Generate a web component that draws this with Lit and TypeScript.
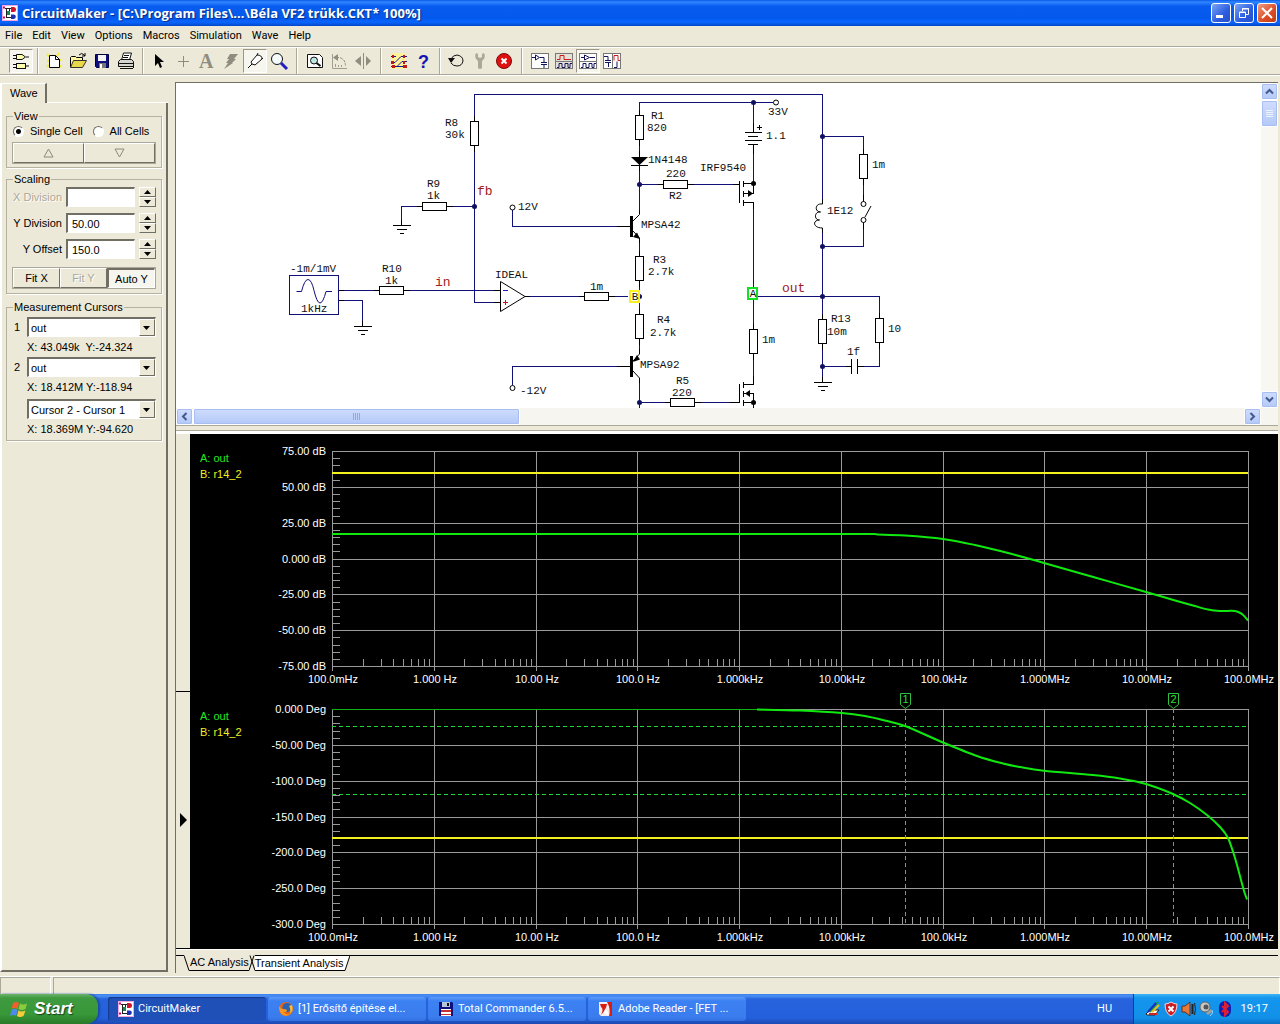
import { LitElement, html, svg, css } from "lit";
import { customElement } from "lit/decorators.js";

const sans = css`"Liberation Sans", Arial, sans-serif`;
const ui = css`Roboto, "Noto Sans", sans-serif`;

/* Logo shared by the title bar and the task button */
const appLogo = html`<svg class="logo" viewBox="0 0 16 16" width="16" height="16" aria-hidden="true">
  <rect x="0.5" y="0.5" width="15" height="15" fill="#fff" stroke="#f7a6dc" />
  <path d="M3 3.500H10M4.500 3V12M4 12.500H9M7.500 3V8M5 8.500H8" stroke="#222" fill="none" />
  <path d="M5 6h3v4H5z" fill="#178a5a" />
  <path d="M9 2h2.500a2.500 2.500 0 0 1 0 5h-2.500z" fill="#d3142e" />
  <path d="M9 9.500h2.500a2.300 2.300 0 0 1 0 4.600h-2.500z" fill="#1d2fb5" />
  <path d="M1 2.500h2M1 12.500h2" stroke="#c01060" stroke-width="2" />
</svg>`;

const icon = (body: unknown) =>
  html`<svg viewBox="0 0 20 20" width="20" height="20" aria-hidden="true">${body}</svg>`;

const icons: Record<string, unknown> = {
  parts: icon(svg`<g fill="#fff" stroke="#111"><path d="M2 4.500h4M2 7.500h4M15 6h3M2 13.500h4M2 16.500h4M15 15h3"/><path d="M5.500 3.500h5.500l3.500 2.500-3.500 2.500h-5.500z" fill="#ffffb0"/><rect x="5.500" y="12.500" width="9" height="5" fill="#ffffb0"/></g>`),
  fresh: icon(svg`<path d="M3 3l3 3M15 2l-2 3M3 10h2M3 16l2-2M17 16l-2-2M17 9h-2" stroke="#f5ee30" stroke-width="2"/><path d="M5.500 4.500h6l4 4v8h-10z" fill="#fff" stroke="#000"/><path d="M11.500 4.500v4h4" fill="none" stroke="#000"/>`),
  open: icon(svg`<path d="M2.500 16V6.500l1-1h4l1 1h6v3" fill="#fff59a" stroke="#000"/><path d="M2.500 16.500l3-7h13l-4 7z" fill="#e8d84a" stroke="#333"/><path d="M11 4q3-3 5 0l1 1M17 2v3h-3" fill="none" stroke="#000"/>`),
  save: icon(svg`<path d="M3.500 3.500h13v13h-12l-1-1z" fill="#10107c" stroke="#000040"/><rect x="6" y="4" width="8" height="6" fill="#f4f4f4"/><rect x="7" y="12" width="7" height="5" fill="#777"/><rect x="8" y="13" width="2" height="4" fill="#fff"/>`),
  print: icon(svg`<path d="M5.500 9l2-7h8l-2 7" fill="#fff" stroke="#111"/><path d="M8 4.500h5M7 6.500h5" stroke="#111"/><path d="M2.500 10.500l2-2h11l2 2v5h-15z" fill="#d4d4cc" stroke="#111"/><path d="M2 12.500h16M4 17.500h13M17.500 11v6" stroke="#111" fill="none"/>`),
  arrow: icon(svg`<path d="M6 3v12l3-3 2 5 2-1-2-5h4z" fill="#000"/>`),
  plus: icon(svg`<path d="M10.500 5v11M5 10.500h11" stroke="#8f8d80"/>`),
  letter: icon(svg`<text x="2" y="17" font-size="20" font-weight="bold" font-family="Liberation Serif, serif" fill="#8f8d80">A</text>`),
  bolt: icon(svg`<path d="M9 3h8l-4 5h2l-4 4h1l-9 6 4-6H5l3-4H6z" fill="#8f8d80"/>`),
  probe: icon(svg`<path d="M3 17l4-4M7 13l-1-2 6-7q5 0 5 4l-7 6-3-1" fill="#fff" stroke="#111"/><path d="M12 4l1-2M17 8l1-1" stroke="#111"/>`),
  zoom: icon(svg`<circle cx="8" cy="8" r="5.500" fill="#f4fbff" stroke="#111"/><path d="M5 7q1-2 3-2" stroke="#fff" fill="none"/><path d="M12 12l6 6" stroke="#2020c0" stroke-width="3"/>`),
  fit: icon(svg`<path d="M2.500 3.500h12l3 3v10h-15z" fill="#fff" stroke="#111"/><circle cx="9" cy="9.500" r="3.500" fill="#bfe6e4" stroke="#111"/><path d="M11.500 12l4 3" stroke="#111" stroke-width="2"/>`),
  rotate: icon(svg`<path d="M3.500 3v14.500H18M6.500 16v-3M9.500 16v-2M12.500 16v-2" fill="none" stroke="#a09e90"/><path d="M7 6.500h3q6 1 6.500 8" fill="none" stroke="#8f8d80" stroke-dasharray="3 1"/><path d="M9 3v7l-5-3.500z" fill="#8f8d80"/>`),
  mirror: icon(svg`<path d="M10.500 2v16" stroke="#8f8d80"/><path d="M8 5v10l-6-5z" fill="#8f8d80"/><path d="M13 5v10l5-5z" fill="#8f8d80"/>`),
  trace: icon(svg`<rect x="3" y="2" width="14" height="16" fill="#fff19a"/><path d="M2 5.500h5M12 5.500h6M2 11.500h4l6-6M2 15.500h6l5-5h5M8 15.500h10" stroke="#16169a" fill="none"/><path d="M3 5.500h2M14 5.500h2M2 11.500h3M14 15.500h4M3 15.500h3M14 11.500h2" stroke="#c01818" stroke-width="3"/>`),
  help: icon(svg`<text x="5" y="17" font-size="18" font-weight="bold" font-family="Liberation Sans, sans-serif" fill="#1414b4">?</text>`),
  undo: icon(svg`<path d="M5 8q2-4 6-4 6 1 6 6-1 5-6 5-4 0-6-3" fill="none" stroke="#111"/><path d="M2 7h7l-4 5z" fill="#111"/>`),
  wrench: icon(svg`<path d="M6 2l2 1v3l2 1 2-1V3l2-1q2 4-1 7l-1 1v7q-2 2-4 0v-7l-1-1q-3-3-1-7z" fill="#aaa899"/>`),
  stop: icon(svg`<circle cx="10" cy="10" r="7.500" fill="#e01010" stroke="#7d0808"/><path d="M7.500 7.500l5 5M12.500 7.500l-5 5" stroke="#fff" stroke-width="2"/>`),
  schem: icon(svg`<rect x="1.500" y="2.500" width="17" height="15" fill="#fff" stroke="#777"/><path d="M2 6.500h3M5.500 4v5l4-2.500zM10 6.500h4v5M11 11.500h6M11 13.500h6M14 14v3" fill="none" stroke="#14145a"/>`),
  waves: icon(svg`<rect x="1.500" y="2.500" width="17" height="15" fill="#e4e2d8" stroke="#777"/><path d="M3 8.500h3v-4h4v4h7" fill="none" stroke="#d01818"/><path d="M2 10.500h16" stroke="#777"/><path d="M3 16.500h2v-4h3v4h3v-4h3v4h2v-4h2" fill="none" stroke="#14145a"/>`),
  split: icon(svg`<rect x="1.500" y="2.500" width="17" height="15" fill="#fff" stroke="#777"/><path d="M2 10.500h16" stroke="#777"/><path d="M3 6.500h3M6.500 4v5l5-2.500zM12 6.500h5M3 16.500h2v-4h3v4h3v-4h3v4h2v-4h2" fill="none" stroke="#14145a"/>`),
  side: icon(svg`<rect x="1.500" y="2.500" width="17" height="15" fill="#fff" stroke="#777"/><path d="M10.500 2v16" stroke="#777"/><path d="M2 5.500h4v4M3 9.500h6M3 11.500h6M6.500 12v4M12 16.500h3v-6" fill="none" stroke="#14145a"/><path d="M12 9.500v-5h4v5h2" fill="none" stroke="#d01818"/>`),
};

type Tool = { id: string; label: string; pressed?: boolean; off?: boolean };
const toolGroups: { gap: string; tools: Tool[] }[] = [
  { gap: "", tools: [{ id: "parts", label: "Parts browser", pressed: true }] },
  {
    gap: "narrow",
    tools: [
      { id: "fresh", label: "New" },
      { id: "open", label: "Open" },
      { id: "save", label: "Save" },
      { id: "print", label: "Print" },
    ],
  },
  {
    gap: "narrow",
    tools: [
      { id: "arrow", label: "Select" },
      { id: "plus", label: "Wire", off: true },
      { id: "letter", label: "Text", off: true },
      { id: "bolt", label: "Delete", off: true },
      { id: "probe", label: "Probe", pressed: true },
      { id: "zoom", label: "Zoom" },
    ],
  },
  {
    gap: "wide",
    tools: [
      { id: "fit", label: "Fit to window" },
      { id: "rotate", label: "Rotate", off: true },
      { id: "mirror", label: "Mirror", off: true },
    ],
  },
  { gap: "wide", tools: [{ id: "trace", label: "Trace" }, { id: "help", label: "Help" }] },
  {
    gap: "narrow",
    tools: [
      { id: "undo", label: "Reset" },
      { id: "wrench", label: "Step", off: true },
      { id: "stop", label: "Stop" },
    ],
  },
  {
    gap: "wide",
    tools: [
      { id: "schem", label: "Schematic" },
      { id: "waves", label: "Waveforms" },
      { id: "split", label: "Split horizontally", pressed: true },
      { id: "side", label: "Split vertically" },
    ],
  },
];

/* ---------- Schematic ---------- */

@customElement("circuit-schematic")
export class CircuitSchematic extends LitElement {
  static styles = css`
    :host { display: block; flex: 1; min-width: 0; overflow: hidden; background: #fff; }
    svg { display: block; }
    .wire { stroke: #101078; fill: none; shape-rendering: crispEdges; }
    .pin { stroke: #000; fill: none; shape-rendering: crispEdges; }
    .body { stroke: #000; fill: #fff; shape-rendering: crispEdges; }
    .thin { stroke: #000; fill: none; }
    .fill { fill: #000; }
    .dot { fill: #101060; }
    .label { font: 11px "Liberation Mono", "Courier New", monospace; fill: #111; }
    .net { font: 13px "Liberation Mono", "Courier New", monospace; fill: #a02020; }
    .mark { font: 11px "Liberation Mono", "Courier New", monospace; fill: #111; text-anchor: middle; }
  `;

  private resV(x: number, y: number) {
    return svg`<path class="pin" d="M${x} ${y - 6}v36"/><rect class="body" x=${x - 4} y=${y} width="8" height="24"/>`;
  }
  private resH(x: number, y: number) {
    return svg`<path class="pin" d="M${x - 6} ${y}h36"/><rect class="body" x=${x} y=${y - 4} width="24" height="8"/>`;
  }
  private ground(x: number, y: number) {
    return svg`<path class="pin" d="M${x} ${y - 6}v6M${x - 9} ${y}h18M${x - 5} ${y + 4}h10M${x - 2} ${y + 8}h4"/>`;
  }
  private dot(x: number, y: number) {
    return svg`<circle class="dot" cx=${x} cy=${y} r="2.500"/>`;
  }
  private terminal(x: number, y: number) {
    return svg`<circle cx=${x} cy=${y} r="2.500" fill="#fff" stroke="#000"/>`;
  }

  render() {
    const labels: [number, number, string][] = [
      [445, 126, "R8"], [445, 138, "30k"], [427, 187, "R9"], [427, 199, "1k"],
      [518, 210, "12V"], [290, 272, "-1m/1mV"], [382, 272, "R10"], [385, 284, "1k"],
      [495, 278, "IDEAL"], [301, 312, "1kHz"], [520, 394, "-12V"],
      [651, 119, "R1"], [647, 131, "820"], [648, 163, "1N4148"], [666, 177, "220"],
      [669, 199, "R2"], [700, 171, "IRF9540"], [768, 115, "33V"], [766, 139, "1.1"],
      [641, 228, "MPSA42"], [653, 263, "R3"], [648, 275, "2.7k"], [590, 290, "1m"],
      [657, 323, "R4"], [650, 336, "2.7k"], [640, 368, "MPSA92"], [676, 384, "R5"],
      [672, 396, "220"], [762, 343, "1m"], [831, 322, "R13"], [827, 335, "10m"],
      [847, 355, "1f"], [872, 168, "1m"], [827, 214, "1E12"], [888, 332, "10"],
    ];
    const nets: [number, number, string][] = [[477, 195, "fb"], [435, 286, "in"], [782, 292, "out"]];
    return html`<svg viewBox="176 83 1085 325" width="1085" height="325" role="img" aria-label="Circuit schematic">
      <path class="wire" d="M474.500 302.500V94.500H822.500V382M401.500 220V206.500H474.500M474.500 302.500H494M338.500 290.500H494M338.500 300.500H362.500V322
        M525 296.500H628M512.500 210V226.500H625M512.500 385V366.500H625M639.500 408V102.500H773M639.500 184.500H734M639.500 402.500H734
        M753.500 102.500V128M753.500 149V183M753.500 205V380M753.500 296.500H879.500V366.500H822.500M822.500 136.500H863.500V246.500H822.500"/>
      <path stroke="#fff" d="M639.500 214V239M639.500 353V379M822.500 204V228M863.500 200V224M847 366.500H862"/>
      <path class="pin" d="M494 290.500h6M494 302.500h6M525 296.500h5M338 290.500h6M338 300.500h6"/>
      ${this.resV(474.5, 121.5)}${this.resH(422.5, 206.5)}${this.resH(379.5, 290.5)}${this.resH(584.5, 296.5)}
      ${this.resV(639.5, 115.5)}${this.resH(663.5, 184.5)}${this.resV(639.5, 256.5)}${this.resV(639.5, 314.5)}
      ${this.resH(670.5, 402.5)}${this.resV(753.5, 329.5)}${this.resV(822.5, 319.5)}${this.resV(863.5, 154.5)}
      ${this.resV(879.5, 318.5)}
      ${this.ground(401.5, 225.5)}${this.ground(362.5, 326.5)}${this.ground(822.5, 382.5)}

      <rect x="289.500" y="275.500" width="49" height="39" fill="#fff" stroke="#101078" />
      <path d="M296.500 291.500h5q3-12 6.500-12t6 11q3 12.500 6 12.500t6-11.500h6" fill="none" stroke="#101078" />

      <path d="M500.500 281.500V311.500L525 296.500Z" fill="#fff" stroke="#000" />
      <path d="M503 290.500h5" stroke="#2020c0" /><path d="M503 302.500h5M505.500 300v5" stroke="#c01818" />

      <path class="pin" d="M639.500 151v20M631 165.500h17" /><path class="fill" d="M631 157h17l-8.500 8z" />

      <path class="pin" d="M617 226.500h14M617 366.500h14" />
      <path class="fill" d="M630 216h3v21h-3zM630 356h3v21h-3z" />
      <path class="thin" d="M633 221l6.500-6.500v-4M633 231l6.500 7v5M633 361l6.500-7v-5M633 371l6.500 7v5" />
      <path class="fill" d="M640 239l-7-2 4-4.500zM633 362l4-7 3 4.500z" />

      <path class="pin" d="M753.500 123v9M745 132.500h17M748 136.500h10M745 140.500h17M748 144.500h10M753.500 145v9M757 127.500h5M759.500 125v5" />

      <path class="pin" d="M733 184.500h6.500M739.500 181V203M743.500 181v6M743.500 191v6M743.500 200v6M743.500 183.500h10v10h-10M743.500 202.500h10v6" />
      <path class="fill" d="M748 190l5 3.500-5 3.500z" />
      <path class="pin" d="M730 402.500h9.500M739.500 403V384M743.500 382v6M743.500 391v6M743.500 400v6M753.500 376v8.500h-10M743.500 393.500h10V408M743.500 402.500h10" />
      <path class="fill" d="M750 390l-5 3.500 5 3.500z" />

      <path class="thin" d="M822.500 199v5c-8-1-8 8-2 8-6-1-7 8-1 8-7 0-7 8 3 8v5M865 217l6-11" />
      <path class="pin" d="M863.500 195v7M863.500 222v7M846 366.500h5M858 366.500h6M851.500 359v15M857.500 359v15" />
      ${this.terminal(863.5, 204)}${this.terminal(863.5, 220)}
      ${this.terminal(512.5, 207.5)}${this.terminal(512.5, 388)}${this.terminal(776, 102.5)}
      ${[[474.5, 206.5], [639.5, 184.5], [639.5, 402.5], [753.5, 102.5], [822.5, 136.5], [822.5, 246.5], [822.5, 296.5], [822.5, 366.5], [639.5, 296.5]].map(([x, y]) => this.dot(x, y))}
      <circle class="fill" cx="753.500" cy="183.500" r="2.500" /><circle class="fill" cx="753.500" cy="402.500" r="2.500" />

      <rect x="630" y="291" width="9" height="11" fill="#fff" stroke="#f8f020" stroke-width="2" />
      <rect x="748" y="288" width="9" height="11" fill="#fff" stroke="#10e020" stroke-width="2" />
      <text class="mark" x="635" y="300">B</text><text class="mark" x="753" y="297">A</text>
      ${labels.map(([x, y, t]) => svg`<text class="label" x=${x} y=${y}>${t}</text>`)}
      ${nets.map(([x, y, t]) => svg`<text class="net" x=${x} y=${y}>${t}</text>`)}
    </svg>`;
  }
}

/* ---------- Bode plots ---------- */

type Pt = [number, number];

/* Smooth path through the points */
function curve(points: Pt[]): string {
  let d = `M${points[0][0]} ${points[0][1]}`;
  for (let i = 0; i < points.length - 1; i++) {
    const a = points[Math.max(0, i - 1)];
    const b = points[i];
    const c = points[i + 1];
    const e = points[Math.min(points.length - 1, i + 2)];
    d += `C${b[0] + (c[0] - a[0]) / 6} ${b[1] + (c[1] - a[1]) / 6} ${c[0] - (e[0] - b[0]) / 6} ${c[1] - (e[1] - b[1]) / 6} ${c[0]} ${c[1]}`;
  }
  return d;
}

@customElement("bode-plots")
export class BodePlots extends LitElement {
  static styles = css`
    :host { display: block; flex: 1; min-width: 0; background: #000; }
    svg { display: block; width: 100%; height: auto; }
    text { font: 11px ${sans}; fill: #fff; }
    .end { text-anchor: end; }
    .mid { text-anchor: middle; }
    .grid { stroke: #9a9a9a; fill: none; shape-rendering: crispEdges; }
    .a { stroke: #10e810; fill: none; stroke-width: 2; }
    .b { stroke: #f4f020; stroke-width: 2; shape-rendering: crispEdges; }
    .trail { stroke: #18d838; fill: none; stroke-dasharray: 4 3; shape-rendering: crispEdges; }
    .flag { stroke: #30c040; fill: #000; }
    .green { fill: #20e820; }
    .yellow { fill: #f0f020; }
  `;

  private plot(top: number, yLabels: string[]) {
    const left = 332, width = 916, height = 215;
    const freq = ["100.0mHz", "1.000 Hz", "10.00 Hz", "100.0 Hz", "1.000kHz", "10.00kHz", "100.0kHz", "1.000MHz", "10.00MHz", "100.0MHz"];
    const px = (v: number) => Math.round(v) + 0.5;
    let d = "";
    for (let i = 0; i <= 9; i++) {
      const x = left + (i * width) / 9;
      d += `M${px(x)} ${top}V${top + height + 5}`;
      if (i < 9) for (let k = 2; k < 10; k++) d += `M${px(x + (Math.log10(k) * width) / 9)} ${top + height - 7}V${top + height}`;
    }
    for (let j = 0; j <= 6; j++) {
      const y = top + (j * height) / 6;
      d += `M${left} ${px(y)}H${left + width}`;
      if (j < 6) for (let k = 1; k < 5; k++) d += `M${left} ${px(y + (k * height) / 30)}h8`;
    }
    return svg`
      <path class="grid" d=${d}/>
      ${yLabels.map((t, j) => svg`<text class="end" x="326" y=${Math.round(top + (j * height) / 6) + 4}>${t}</text>`)}
      ${freq.map((t, i) => svg`<text class="mid" x=${Math.round(left + (i * width) / 9) + 1} y=${top + height + 17}>${t}</text>`)}
      <text class="green" x="200" y=${top + 11}>A: out</text>
      <text class="yellow" x="200" y=${top + 27}>B: r14_2</text>`;
  }

  private trail(x: number, y: number) {
    return svg`<path class="trail" d="M${x} 709V924"/><path class="trail" d="M332 ${y}H1248"/>`;
  }

  private flag(x: number, name: string) {
    return svg`<path class="flag" d="M${x - 5} 693.500h10v11l-5 4-5-4z"/>
      <text class="mid green" x=${x} y="703">${name}</text>`;
  }

  render() {
    const gain: Pt[] = [[332, 534], [600, 534], [848, 534], [878, 534.5], [905, 535.5], [943, 539], [975, 545], [1010, 553.5], [1044, 563], [1095, 577.5], [1146, 592], [1170, 599], [1193, 605.5], [1208, 609.5], [1220, 611], [1235, 611], [1242, 614], [1248, 620.5]];
    const phase: Pt[] = [[757, 709.5], [800, 710.5], [842, 713], [865, 716], [885, 720.5], [905, 726], [943, 742.5], [977, 756], [1003, 763.5], [1020, 767], [1044, 770.7], [1093, 775], [1120, 778.5], [1146, 784], [1173, 794], [1190, 803], [1207, 815], [1220, 827], [1228, 838], [1235, 858], [1241, 880], [1244, 891], [1247, 899.5]];
    return html`<svg viewBox="190 434 1088 515" role="img" aria-label="AC analysis, gain and phase">
      ${this.plot(451, ["75.00 dB", "50.00 dB", "25.00 dB", "0.000 dB", "-25.00 dB", "-50.00 dB", "-75.00 dB"])}
      ${this.plot(709, ["0.000 Deg", "-50.00 Deg", "-100.0 Deg", "-150.0 Deg", "-200.0 Deg", "-250.0 Deg", "-300.0 Deg"])}
      <path class="b" d="M332 473H1248M332 838H1248" />
      <path d="M332 709.500H757" stroke="#10b010" shape-rendering="crispEdges" />
      ${this.trail(905.5, 726.5)}${this.trail(1173.5, 794.5)}
      ${this.flag(905.5, "1")}${this.flag(1173.5, "2")}
      <path class="a" d=${curve(gain)} /><path class="a" d=${curve(phase)} />
    </svg>`;
  }
}

/* ---------- Wave panel ---------- */

const triangle = (up: boolean) =>
  html`<svg viewBox="0 0 8 4" width="8" height="4" aria-hidden="true"><path d=${up ? "M0 4h7l-3.500-4z" : "M0 0h7l-3.500 4z"} fill="#000" /></svg>`;

@customElement("wave-panel")
export class WavePanel extends LitElement {
  static styles = css`
    :host { display: flex; flex-direction: column; flex: 0 0 168px; padding: 7px 0 4px; margin-right: 7px; font: 11px/14px ${sans}; color: #000; box-sizing: border-box; }
    .tabs { display: flex; height: 20px; }
    .tab { all: unset; box-sizing: border-box; width: 47px; padding: 1px 0 2px 8px; border-left: 2px solid #fff; border-right: 2px solid #716f64; border-top: 1px solid #fff; }
    .rest { flex: 1; border-bottom: 1px solid #fff; }
    .sheet { flex: 1; border-left: 2px solid #fff; border-right: 2px solid #716f64; border-bottom: 2px solid #716f64; padding: 6px 4px; display: flex; flex-direction: column; gap: 4px; }
    fieldset { margin: 0; min-width: 0; border: 1px solid #b5b2a2; box-shadow: 1px 1px 0 #fff; padding: 1px 5px 4px; display: flex; flex-direction: column; gap: 6px; }
    .view { padding: 3px 5px; }
    .measure { gap: 3px; margin-top: 2px; padding-top: 3px; }
    legend { padding: 0 1px; margin-left: 1px; line-height: 14px; }
    .row { display: flex; align-items: center; }
    .radios { gap: 9px; height: 14px; margin-top: -2px; }
    .radios label { display: flex; align-items: center; gap: 6px; white-space: nowrap; }
    .radios input { appearance: none; width: 11px; height: 11px; margin: 0 0 0 1px; border-radius: 50%; border: 1px solid; border-color: #716f64 #fff #fff #716f64; background: #fff; box-sizing: border-box; }
    .radios input:checked { background: radial-gradient(circle, #000 0 2px, #fff 3px); }
    button { font: inherit; color: #000; background: #ece9d8; border: 1px solid; border-color: #fff #716f64 #716f64 #fff; padding: 0; box-sizing: border-box; display: grid; place-items: center; }
    .wide { flex: 1; height: 20px; }
    .frame { border: 1px solid #aca899; }
    .pair { margin-top: -2px; }
    .fits { margin-top: 2px; }
    button:disabled { color: #aca899; text-shadow: 1px 1px 0 #fff; }
    button.down { border-color: #716f64 #fff #fff #716f64; border-width: 2px 1px 1px 2px; background: #f6f5ee; }
    .field { display: grid; grid-template-columns: 50px 1fr 17px; column-gap: 4px; align-items: center; height: 20px; text-align: right; white-space: nowrap; }
    .muted { color: #aca899; text-shadow: 1px 1px 0 #fff; }
    input.text { font: 11px ${sans}; min-width: 0; width: 100%; height: 20px; box-sizing: border-box; border: 2px solid; border-color: #716f64 #fff #fff #716f64; border-right-width: 1px; border-bottom-width: 1px; padding: 0 4px; background: #fff; }
    .spin { display: grid; grid-template-rows: 10px 10px; }
    .pick { display: grid; grid-template-columns: 13px 1fr; align-items: center; margin-left: 2px; height: 20px; }
    .combo { grid-column: 2; display: grid; grid-template-columns: 1fr 16px; border: 2px solid; border-color: #716f64 #fff #fff #716f64; border-right-width: 1px; border-bottom-width: 1px; background: #fff; height: 20px; box-sizing: border-box; }
    .combo select { grid-area: 1 / 1 / 2 / 3; appearance: none; border: 0; background: none; font: inherit; padding: 0 16px 0 2px; color: #000; height: 17px; min-width: 0; }
    .combo span { grid-area: 1 / 2; background: #ece9d8; border: 1px solid; border-color: #fff #716f64 #716f64 #fff; display: grid; place-items: center; pointer-events: none; }
    .value { margin-left: 15px; line-height: 14px; white-space: pre; }
    .last { margin-top: 2px; }
  `;

  private field(id: string, label: string, value: string, off = false) {
    return html`<div class="field">
      <label for=${id} class=${off ? "muted" : ""}>${label}</label>
      <input class="text" id=${id} type="text" .value=${value} ?disabled=${off} />
      <div class="spin">
        <button aria-label="Increase ${label}">${triangle(true)}</button>
        <button aria-label="Decrease ${label}">${triangle(false)}</button>
      </div>
    </div>`;
  }

  private combo(id: string, caption: string, option: string, extra = "") {
    return html`<div class="pick ${extra}">
      <label for=${id}>${caption}</label>
      <div class="combo">
        <select id=${id} aria-label=${caption ? `Cursor ${caption}` : "Cursor difference"}><option>${option}</option></select>
        <span>${triangle(false)}</span>
      </div>
    </div>`;
  }

  render() {
    return html`
      <div class="tabs"><button class="tab">Wave</button><div class="rest"></div></div>
      <div class="sheet">
        <fieldset class="view">
          <legend>View</legend>
          <div class="row radios">
            <label><input type="radio" name="cells" checked />Single Cell</label>
            <label><input type="radio" name="cells" />All Cells</label>
          </div>
          <div class="row frame pair">
            <button class="wide" aria-label="Previous cell"><svg width="11" height="10" viewBox="0 0 11 10"><path d="M5.500 1L10 9H1Z" fill="none" stroke="#8c8a7c" /></svg></button>
            <button class="wide" aria-label="Next cell"><svg width="11" height="10" viewBox="0 0 11 10"><path d="M5.500 9L10 1H1Z" fill="none" stroke="#8c8a7c" /></svg></button>
          </div>
        </fieldset>
        <fieldset>
          <legend>Scaling</legend>
          ${this.field("xdiv", "X Division", "", true)}
          ${this.field("ydiv", "Y Division", "50.00")}
          ${this.field("yoff", "Y Offset", "150.0")}
          <div class="row frame fits">
            <button class="wide">Fit X</button><button class="wide" disabled>Fit Y</button><button class="wide down" aria-pressed="true">Auto Y</button>
          </div>
        </fieldset>
        <fieldset class="measure">
          <legend>Measurement Cursors</legend>
          ${this.combo("c1", "1", "out")}
          <div class="value">X: 43.049k  Y:-24.324</div>
          ${this.combo("c2", "2", "out")}
          <div class="value">X: 18.412M Y:-118.94</div>
          ${this.combo("cd", "", "Cursor 2 - Cursor 1", "last")}
          <div class="value">X: 18.369M Y:-94.620</div>
        </fieldset>
      </div>`;
  }
}

/* ---------- Taskbar ---------- */

@customElement("task-bar")
export class TaskBar extends LitElement {
  static styles = css`
    :host { display: flex; height: 30px; align-items: stretch; font: 11px/14px ${ui}; color: #fff; background: linear-gradient(#3a81ec 0, #4a90f4 2px, #2663dc 5px, #2560dc 24px, #1c48b0 30px); }
    button { border: 0; padding: 0; color: inherit; font: inherit; display: flex; align-items: center; }
    .start { flex: 0 0 98px; padding-left: 10px; gap: 5px; border-radius: 0 12px 12px 0; background: linear-gradient(#6cb46c 0, #3f9a3f 4px, #389838 20px, #2a7a2a 30px); box-shadow: 2px 0 2px #1a4aa8; font: italic bold 17px ${sans}; text-shadow: 1px 1px 1px #173f17; }
    .tasks { display: flex; flex: 1; gap: 2px; padding: 3px 0 3px 10px; min-width: 0; }
    .task { flex: 0 1 158px; min-width: 0; gap: 4px; padding-left: 10px; border-radius: 3px; background: linear-gradient(#5a9af8 0, #3c81f3 4px, #3a7cee 20px, #3270e0 24px); white-space: nowrap; text-align: left; }
    .task.on { background: #1e50b8; box-shadow: inset 1px 1px 1px #143a8c; }
    .lang { width: 56px; justify-content: center; background: none; }
    .tray { display: flex; align-items: center; gap: 2px; padding: 0 12px 0 11px; background: linear-gradient(#3cb4f8 0, #1496ee 4px, #1290e8 24px, #0d6fc4 30px); border-left: 1px solid #0c3c94; }
    .clock { margin-left: 6px; }
  `;

  render() {
    const fox = html`<svg width="16" height="16" viewBox="0 0 16 16" aria-hidden="true"><circle cx="8" cy="8" r="7" fill="#e2661a" /><circle cx="9" cy="6.500" r="4.500" fill="#2a62b4" /><path d="M1 5q2 4 5 3 3 0 3 2-2 2-4 1 4 4 8 1-3 4-8 2-4-2-4-9z" fill="#f89820" /><path d="M14 4q2 5-2 9 1-5-1-8z" fill="#f7c030" /></svg>`;
    const disk = html`<svg width="16" height="16" viewBox="0 0 16 16" aria-hidden="true"><path d="M1 1h13l1 1v13H1z" fill="#10107c" /><path d="M4 1h8v5H4z" fill="#b8c4d8" /><path d="M9 2h2v3H9z" fill="#111" /><path d="M3 8h10v7H3z" fill="#fff" /><path d="M3 9h10v2H3zM3 13h10v1H3z" fill="#c83030" /></svg>`;
    const reader = html`<svg width="16" height="16" viewBox="0 0 16 16" aria-hidden="true"><path d="M1 1h13v14H3l-2-2z" fill="#f4ecec" /><path d="M9 1h5v14h-3q2-7-2-14z" fill="#d81c14" /><path d="M2 3h7q-1 6-6 11 3-6 0-8z" fill="#d81c14" /><path d="M7 8q3 1 3 6l-4-2z" fill="#fff" /></svg>`;
    return html`
      <button class="start"><svg width="19" height="18" viewBox="0 0 19 18" aria-hidden="true">
        <path d="M3 3q3-2 6 0L7.500 9q-3-2-6 0z" fill="#f0602c" /><path d="M10 3.500q3 2 7 0L15.500 9q-4 2-7 0z" fill="#8ccc3c" />
        <path d="M1.500 10q3-2 6 0L6 16q-3-2-6 0z" fill="#4c8cf0" /><path d="M8.500 10.500q3 2 7 0L13.500 16q-4 2-6.500 0z" fill="#f8cc38" /></svg>Start</button>
      <div class="tasks">
        <button class="task on">${appLogo}CircuitMaker</button>
        <button class="task">${fox}[1] Erősítő építése el...</button>
        <button class="task">${disk}Total Commander 6.5...</button>
        <button class="task">${reader}Adobe Reader - [FET ...</button>
      </div>
      <button class="lang">HU</button>
      <div class="tray">
        <svg width="16" height="16" viewBox="0 0 16 16" aria-hidden="true"><path d="M1 13l4-4h9l-4 5H2z" fill="#f4f4f4" stroke="#222" /><path d="M5 11L13 1" stroke="#18a030" stroke-width="2" /><path d="M3 11l8-9" stroke="#1830c0" stroke-width="2" /><path d="M7 11l7-7" stroke="#e8c020" stroke-width="2" /><path d="M4 13h8" stroke="#d02020" stroke-width="2" /></svg>
        <svg width="16" height="16" viewBox="0 0 16 16" aria-hidden="true"><path d="M8 1q3 2 6 2 0 9-6 12-6-3-6-12 3 0 6-2z" fill="#cc1c24" stroke="#f0d8d8" /><path d="M5.500 5.500l5 5M10.500 5.500l-5 5" stroke="#fff" stroke-width="2" /></svg>
        <svg width="16" height="16" viewBox="0 0 16 16" aria-hidden="true"><path d="M1 5h3l5-4v14l-5-4H1z" fill="#e87838" stroke="#5a3420" /><path d="M11.500 3v10" stroke="#222" stroke-width="2" /><path d="M13.500 2q2 6 0 12" fill="none" stroke="#222" /></svg>
        <svg width="16" height="16" viewBox="0 0 16 16" aria-hidden="true"><circle cx="6" cy="6" r="5" fill="#c8c8c4" stroke="#66665e" /><circle cx="7" cy="6" r="2.500" fill="#555" /><path d="M7 12l5-4 1 3-4 3z" fill="#a0a09c" /><path d="M13 9q2 3-2 6" fill="none" stroke="#9cd0ff" /></svg>
        <svg width="16" height="16" viewBox="0 0 16 16" aria-hidden="true"><rect x="2" y="0" width="12" height="16" rx="6" fill="#1020b0" /><path d="M5 5l6 6-3 3V2l3 3-6 6" fill="none" stroke="#e02030" stroke-width="2" /></svg>
        <span class="clock">19:17</span>
      </div>`;
  }
}

/* ---------- Application window ---------- */

@customElement("app-root")
export class AppRoot extends LitElement {
  static styles = css`
    :host { display: flex; flex-direction: column; min-height: 100vh; background: #ece9d8; font: 11px/14px ${ui}; color: #000; }
    button { font: inherit; color: inherit; padding: 0; border: 0; background: none; }
    svg { display: block; }
    .title { display: flex; align-items: center; gap: 4px; height: 26px; padding: 0 3px 0 2px; background: linear-gradient(#0a5ae8 0, #2f86ff 2px, #0a5cf0 6px, #0458ec 18px, #0a66ff 22px, #0348c8 26px); color: #fff; }
    .title h1 { flex: 1; margin: 0; font: bold 13px "Open Sans", ${ui}; text-shadow: 1px 1px 1px #0a2a80; white-space: nowrap; overflow: hidden; }
    .win { width: 20px; height: 20px; box-sizing: border-box; border: 1px solid #fff; border-radius: 3px; background: linear-gradient(135deg, #7aa4f4, #2c5ce0 60%, #2450c8); display: grid; place-items: center; }
    .close { background: linear-gradient(135deg, #f09a80, #dc4c24 60%, #c03c14); }
    .buttons { display: flex; gap: 3px; }
    .menu { display: flex; height: 20px; align-items: center; gap: 10px; padding: 0 5px; border-bottom: 1px solid #aca899; }
    .tools { display: flex; height: 28px; align-items: center; padding-left: 9px; border-top: 1px solid #fff; border-bottom: 1px solid #aca899; box-sizing: border-box; }
    .tool { width: 24px; height: 24px; box-sizing: border-box; display: grid; place-items: center; }
    .tool.pressed { background: #f6f5ee; border: 1px solid; border-color: #9a9788 #fff #fff #9a9788; }
    .sep { height: 26px; display: flex; justify-content: center; }
    .sep::before { content: ""; width: 1px; background: #aca899; border-right: 1px solid #fff; }
    .narrow { width: 9px; }
    .wide { width: 12px; }
    .body { display: flex; flex: 1; border-top: 1px solid #fff; }
    .work { flex: 1; min-width: 0; display: flex; flex-direction: column; margin: 6px 2px 3px 0; border-left: 1px solid #716f64; border-top: 1px solid #716f64; }
    .pane { display: flex; }
    .vbar { flex: 0 0 17px; display: flex; flex-direction: column; background: #f8f7f2; }
    .hbar { display: flex; height: 17px; background: #f6f5ef; padding-right: 17px; border-bottom: 1px solid #aca899; }
    .arrow, .thumb { box-sizing: border-box; border: 1px solid #fff; border-radius: 2px; background: linear-gradient(#cfdcfd, #b4c9f8); box-shadow: inset 0 0 0 1px #a8bef0; display: grid; place-items: center; }
    .arrow { flex: 0 0 17px; height: 17px; width: 17px; }
    .vbar .thumb { height: 27px; }
    .hbar .thumb { flex: 0 1 327px; }
    .space { flex: 1; }
    .split { height: 4px; border-bottom: 1px solid #aca899; }
    .results { display: flex; padding-top: 3px; background: #fff; border-bottom: 1px solid #fff; }
    .gutter { flex: 0 0 14px; display: flex; flex-direction: column; background: #ece9d8; border-bottom: 1px solid #000; box-sizing: border-box; }
    .cell { display: grid; place-items: center; flex: 257; }
    .cell:first-child { border-bottom: 1px solid #000; }
    .sheets { display: flex; align-items: flex-start; margin-top: 5px; height: 17px; font: 11px/15px ${sans}; }
    .lead { width: 8px; border-top: 1px solid #000; }
    .rule { flex: 1; border-top: 1px solid #000; }
    .sheet { display: flex; white-space: nowrap; }
    .sheet span { border-bottom: 1px solid #000; }
    .sheet.back span { border-top: 1px solid #000; background: #fff; line-height: 14px; }
    .status { display: flex; height: 17px; gap: 2px; border-top: 1px solid #fff; }
    .status div { border: 1px solid; border-color: #aca899 #fff #fff #aca899; border-bottom: 0; }
    .state { flex: 0 0 49px; }
    .message { flex: 1; }
  `;

  private chevron(turn: number) {
    return html`<svg width="9" height="9" viewBox="0 0 9 9" aria-hidden="true"><path d="M1 6.500l3.500-3.500 3.500 3.500" transform="rotate(${turn} 4.500 4.500)" fill="none" stroke="#41598c" stroke-width="2" /></svg>`;
  }

  render() {
    const slant = (d: string, fill = "none") =>
      html`<svg width="6" height="16" viewBox="0 0 6 16" aria-hidden="true"><path d=${d} fill=${fill} stroke="#000" /></svg>`;
    return html`
      <header class="title">
        ${appLogo}
        <h1>CircuitMaker - [C:\\Program Files\\...\\Béla VF2 trükk.CKT* 100%]</h1>
        <div class="buttons">
          <button class="win" aria-label="Minimize"><svg width="12" height="12" viewBox="0 0 12 12"><path d="M1 9.500h7" stroke="#fff" stroke-width="3" /></svg></button>
          <button class="win" aria-label="Restore"><svg width="12" height="12" viewBox="0 0 12 12"><path d="M4.500 4V1.500h6v6H8M4 2h7M1.500 5h6v5.500h-6zM1 5.500h7" fill="none" stroke="#fff" /></svg></button>
          <button class="win close" aria-label="Close"><svg width="12" height="12" viewBox="0 0 12 12"><path d="M1 1l10 10M11 1L1 11" stroke="#fff" stroke-width="2" /></svg></button>
        </div>
      </header>
      <nav class="menu">
        ${["File", "Edit", "View", "Options", "Macros", "Simulation", "Wave", "Help"].map((m) => html`<button>${m}</button>`)}
      </nav>
      <div class="tools" role="toolbar">
        ${toolGroups.map((g) => html`
          ${g.gap ? html`<span class="sep ${g.gap}"></span>` : ""}
          ${g.tools.map((t) => html`<button class="tool ${t.pressed ? "pressed" : ""}" aria-label=${t.label} ?disabled=${t.off}>${icons[t.id]}</button>`)}`)}
      </div>
      <main class="body">
        <wave-panel></wave-panel>
        <section class="work">
          <div class="pane">
            <circuit-schematic></circuit-schematic>
            <div class="vbar">
              <button class="arrow" aria-label="Scroll up">${this.chevron(0)}</button>
              <div class="thumb"><svg width="7" height="8" viewBox="0 0 7 8"><path d="M0 0.500h7M0 2.500h7M0 4.500h7M0 6.500h7" stroke="#eef4fe" /></svg></div>
              <div class="space"></div>
              <button class="arrow" aria-label="Scroll down">${this.chevron(180)}</button>
            </div>
          </div>
          <div class="hbar">
            <button class="arrow" aria-label="Scroll left">${this.chevron(-90)}</button>
            <div class="thumb"><svg width="8" height="7" viewBox="0 0 8 7"><path d="M0.500 0v7M2.500 0v7M4.500 0v7M6.500 0v7" stroke="#8caae6" /></svg></div>
            <div class="space"></div>
            <button class="arrow" aria-label="Scroll right">${this.chevron(90)}</button>
          </div>
          <div class="split"></div>
          <div class="results">
            <div class="gutter">
              <div class="cell"></div>
              <div class="cell"><svg width="7" height="14" viewBox="0 0 7 14"><path d="M0 0v14l7-7z" /></svg></div>
            </div>
            <bode-plots></bode-plots>
          </div>
          <div class="sheets">
            <div class="lead"></div>
            <button class="sheet">${slant("M0 0.500l5 15h1")}<span>AC Analysis</span></button>
            <button class="sheet back">${slant("M0 15.500L5 0.500M1 0.500l5 15", "#fff")}<span>Transient Analysis</span>${slant("M0 15.500h1L6 0.500H0", "#fff")}</button>
            <div class="rule"></div>
          </div>
        </section>
      </main>
      <footer class="status"><div class="state"></div><div class="message"></div></footer>
      <task-bar></task-bar>`;
  }
}
